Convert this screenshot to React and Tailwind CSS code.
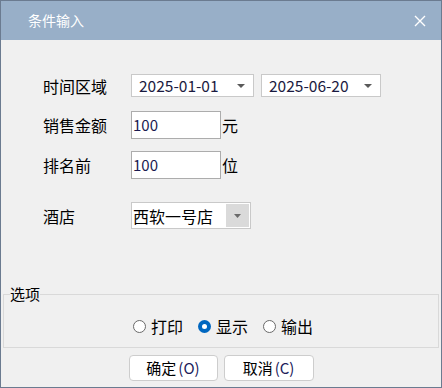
import React, { useState } from 'react';

// 条件输入 dialog

const font = { fontFamily: '"Noto Sans CJK SC", "Noto Sans", sans-serif' };

const Arrow = ({ className = '' }) => (
    <svg width="8" height="4" viewBox="0 0 8 4" className={className}>
        <path d="M0 0 L8 0 L4 4 Z" fill="#5a5a5a" />
    </svg>
);

const DateCombo = ({ value, width }) => (
    <div className={`flex items-center justify-between h-[23px] bg-white border border-[#c9c9c9] pl-[7px] pr-[8px] ${width}`}>
        <span className="text-[15.5px] leading-none text-[#1a1a40]">{value}</span>
        <Arrow />
    </div>
);

const Radio = ({ label, checked, onClick }) => (
    <label className="flex items-center gap-[5px] cursor-pointer" onClick={onClick}>
        {checked ? (
            <span className="w-[13px] h-[13px] rounded-full bg-[#0067c0] flex items-center justify-center">
                <span className="w-[5px] h-[5px] rounded-full bg-white" />
            </span>
        ) : (
            <span className="w-[13px] h-[13px] rounded-full bg-white border border-[#6a6a6a]" />
        )}
        <span className="text-[16px] leading-none text-black">{label}</span>
    </label>
);

const App = () => {
    const [mode, setMode] = useState('显示');

    return (
        <div className="w-[442px] h-[388px] flex flex-col bg-[#f0f0f0] border border-[#6b7b90]" style={font}>
            <div className="h-[39px] shrink-0 bg-[#98afc8] flex items-center justify-between pl-[27px] pr-[15px]">
                <span className="text-white text-[14px]">条件输入</span>
                <svg width="12" height="12" viewBox="0 0 12 12">
                    <path d="M1 1 L11 11 M11 1 L1 11" stroke="white" strokeWidth="1.4" />
                </svg>
            </div>

            <div className="flex flex-col pl-[42px] pt-[34px]">
                <div className="flex items-center h-[23px]">
                    <span className="w-[88px] text-[16px] text-black">时间区域</span>
                    <div className="flex gap-[7px]">
                        <DateCombo value="2025-01-01" width="w-[123px]" />
                        <DateCombo value="2025-06-20" width="w-[120px]" />
                    </div>
                </div>

                <div className="flex items-center mt-[14px]">
                    <span className="w-[88px] text-[16px] text-black">销售金额</span>
                    <div className="w-[90px] h-[28px] bg-white border border-[#acacac] flex items-center pl-[1px]">
                        <span className="text-[15px] text-[#1a1a50]">100</span>
                    </div>
                    <span className="text-[16px] text-black ml-[1px]">元</span>
                </div>

                <div className="flex items-center mt-[12px]">
                    <span className="w-[88px] text-[16px] text-black">排名前</span>
                    <div className="w-[90px] h-[28px] bg-white border border-[#acacac] flex items-center pl-[1px]">
                        <span className="text-[15px] text-[#1a1a50]">100</span>
                    </div>
                    <span className="text-[16px] text-black ml-[1px]">位</span>
                </div>

                <div className="flex items-center mt-[23px]">
                    <span className="w-[88px] text-[16px] text-black">酒店</span>
                    <div className="w-[120px] h-[27px] bg-white border border-[#c9c9c9] flex items-center justify-between pl-[1px] pr-[1px]">
                        <span className="text-[16px] text-black">西软一号店</span>
                        <div className="w-[23px] h-[23px] bg-[#dadada] flex items-center justify-center">
                            <svg width="7" height="4" viewBox="0 0 7 4">
                                <path d="M0 0 L7 0 L3.5 4 Z" fill="#6a6a6a" />
                            </svg>
                        </div>
                    </div>
                </div>
            </div>

            <fieldset className="mt-[55px] mx-[2px] h-[64px] border border-[#d9d9d9] pl-[6px]">
                <legend className="text-[15px] leading-[20px] text-black">选项</legend>
                <div className="flex justify-center gap-[15px] pt-[14px] pr-[2px]">
                    {['打印', '显示', '输出'].map(opt => (
                        <Radio key={opt} label={opt} checked={mode === opt} onClick={() => setMode(opt)} />
                    ))}
                </div>
            </fieldset>

            <div className="flex justify-center gap-[6px] mt-[7px]">
                <button className="w-[89px] h-[26px] bg-white border border-[#cdcdcd] rounded-[4px] text-[15px] text-black flex items-center justify-center">
                    确定<span className="ml-[2px] text-[#20205a]">(O)</span>
                </button>
                <button className="w-[90px] h-[26px] bg-white border border-[#cdcdcd] rounded-[4px] text-[15px] text-black flex items-center justify-center">
                    取消<span className="ml-[2px] text-[#20205a]">(C)</span>
                </button>
            </div>
        </div>
    );
};

export default App;
